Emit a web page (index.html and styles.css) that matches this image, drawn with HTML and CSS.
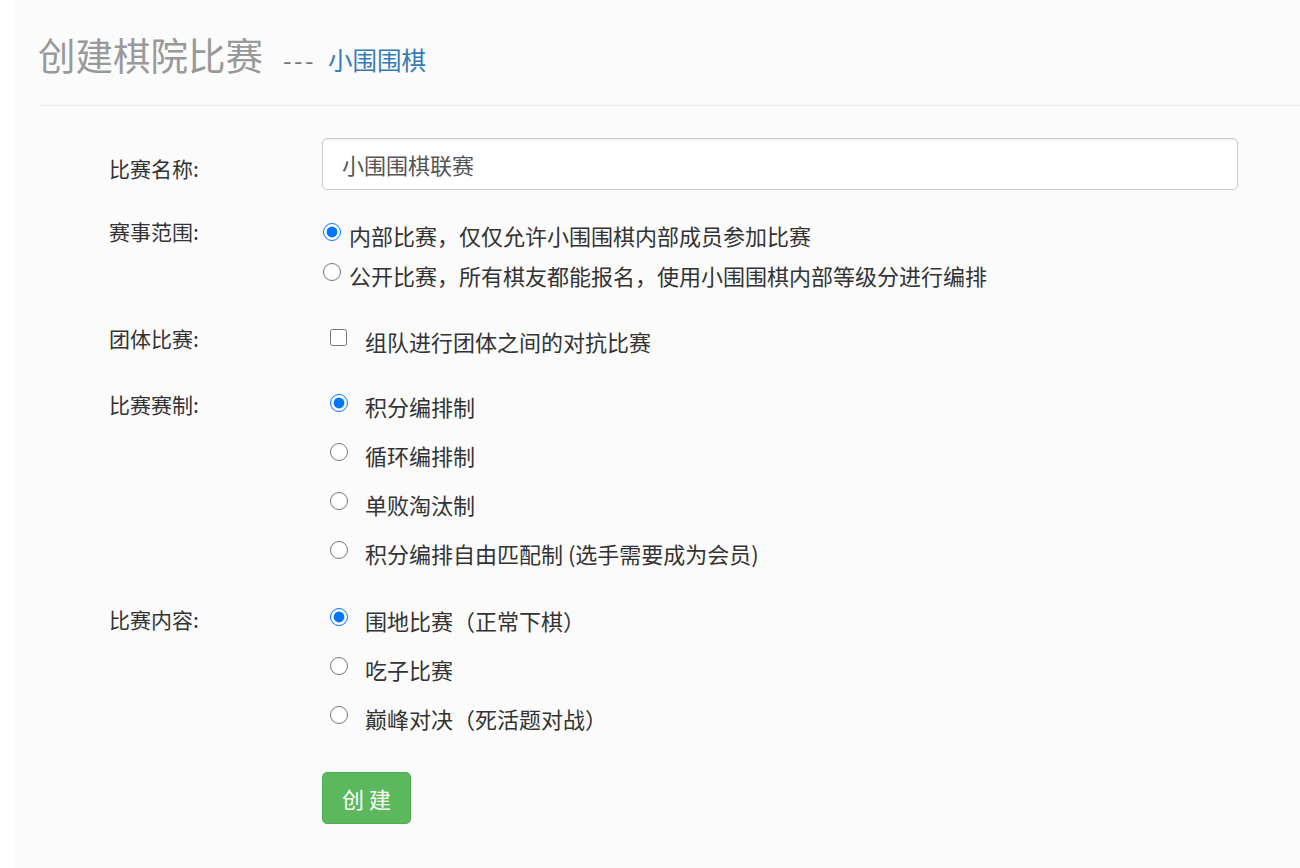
FILE: index.html
```html
<!DOCTYPE html>
<html lang="zh-CN">
<head>
    <meta charset="UTF-8">
    <meta name="viewport" content="width=device-width, initial-scale=1.0">
    <title>创建棋院比赛</title>
    <link rel="stylesheet" href="styles.css">
</head>
<body>
    <div class="panel">
        <div class="page-header">
            <h1>创建棋院比赛<small><span class="dashes">---</span><a href="#">小围围棋</a></small></h1>
        </div>

        <form class="match-form" onsubmit="return false;">
            <!-- 比赛名称 -->
            <div class="form-group group-name">
                <label class="control-label" for="matchName">比赛名称:</label>
                <input type="text" id="matchName" class="form-control" value="小围围棋联赛">
            </div>

            <!-- 赛事范围 -->
            <div class="form-group group-scope">
                <label class="control-label">赛事范围:</label>
                <div class="options">
                    <label class="option scope-option"><input type="radio" name="scope" checked>内部比赛，仅仅允许小围围棋内部成员参加比赛</label>
                    <label class="option scope-option"><input type="radio" name="scope">公开比赛，所有棋友都能报名，使用小围围棋内部等级分进行编排</label>
                </div>
            </div>

            <!-- 团体比赛 -->
            <div class="form-group group-team">
                <label class="control-label">团体比赛:</label>
                <div class="options">
                    <label class="option team-option"><input type="checkbox" name="team">组队进行团体之间的对抗比赛</label>
                </div>
            </div>

            <!-- 比赛赛制 -->
            <div class="form-group group-system">
                <label class="control-label">比赛赛制:</label>
                <div class="options">
                    <label class="option list-option"><input type="radio" name="system" checked>积分编排制</label>
                    <label class="option list-option"><input type="radio" name="system">循环编排制</label>
                    <label class="option list-option"><input type="radio" name="system">单败淘汰制</label>
                    <label class="option list-option"><input type="radio" name="system">积分编排自由匹配制 (选手需要成为会员)</label>
                </div>
            </div>

            <!-- 比赛内容 -->
            <div class="form-group group-content">
                <label class="control-label">比赛内容:</label>
                <div class="options">
                    <label class="option list-option"><input type="radio" name="content" checked>围地比赛（正常下棋）</label>
                    <label class="option list-option"><input type="radio" name="content">吃子比赛</label>
                    <label class="option list-option"><input type="radio" name="content">巅峰对决（死活题对战）</label>
                </div>
            </div>

            <div class="form-group group-submit">
                <div></div>
                <div><button type="submit" class="btn-success">创 建</button></div>
            </div>
        </form>
    </div>
</body>
</html>
```

FILE: styles.css
```css
body {
    margin: 0;
    background: #fff;
    font-family: "Noto Sans CJK SC", "Noto Sans", sans-serif;
    color: #333;
}
.panel {
    margin-left: 15px;
    min-height: 100vh;
    background: #fbfbfb;
    padding-left: 23px;
    overflow: hidden;
}
.page-header {
    padding: 33px 0 0;
    height: 72px;
    border-bottom: 1px solid #eee;
}
.page-header h1 {
    display: flex;
    align-items: baseline;
    margin: 0;
    font-size: 37.5px;
    line-height: 41px;
    font-weight: normal;
    color: #999;
}
.page-header small {
    font-size: 24.5px;
    line-height: 1;
    color: #777;
    margin-left: 20px;
}
.page-header .dashes {
    letter-spacing: 2.5px;
}
.page-header small a {
    color: #337ab7;
    text-decoration: none;
    margin-left: 12px;
}
.match-form {
    margin-left: 71px;
}
.form-group {
    display: grid;
    grid-template-columns: 213px 916px;
}
.control-label {
    font-size: 21px;
    line-height: 28px;
    color: #333;
}
.form-control {
    box-sizing: border-box;
    width: 100%;
    height: 52px;
    padding: 0 19px;
    border: 1px solid #ccc;
    border-radius: 5px;
    background: #fff;
    font-family: inherit;
    font-size: 22px;
    color: #555;
    box-shadow: inset 0 1px 1px rgba(0,0,0,0.075);
}
.option {
    display: flex;
    align-items: center;
    font-size: 22px;
    color: #333;
    white-space: nowrap;
}
.option input {
    margin: 0;
    flex: none;
    accent-color: #0075ff;
}

/* name */
.group-name {
    margin-top: 32px;
}
.group-name .control-label {
    padding-top: 16px;
}

/* scope */
.group-scope {
    margin-top: 25px;
}
.group-scope .control-label {
    padding-top: 2px;
}
.scope-option {
    height: 40px;
}
.scope-option input {
    width: 18px;
    height: 18px;
    margin: 0 8px 7px 1px;
}

/* team */
.group-team {
    margin-top: 26px;
}
.group-team .control-label {
    padding-top: 3px;
}
.team-option {
    height: 40px;
}
.team-option input {
    width: 17px;
    height: 17px;
    margin: 0 18px 7px 8px;
}

/* system / content */
.group-system {
    margin-top: 20px;
}
.group-system .control-label {
    padding-top: 9px;
}
.group-content {
    margin-top: 18px;
}
.group-content .control-label {
    padding-top: 10px;
}
.list-option {
    height: 49px;
}
.list-option input {
    width: 18px;
    height: 18px;
    margin: 0 17px 5px 8px;
}

/* submit */
.group-submit {
    margin-top: 30px;
}
.btn-success {
    height: 52px;
    padding: 0 19px;
    border: 1px solid #4cae4c;
    border-radius: 5px;
    background: #5cb85c;
    color: #fff;
    font-family: inherit;
    font-size: 22px;
    cursor: pointer;
}
.btn-success:hover {
    background: #449d44;
}
```
